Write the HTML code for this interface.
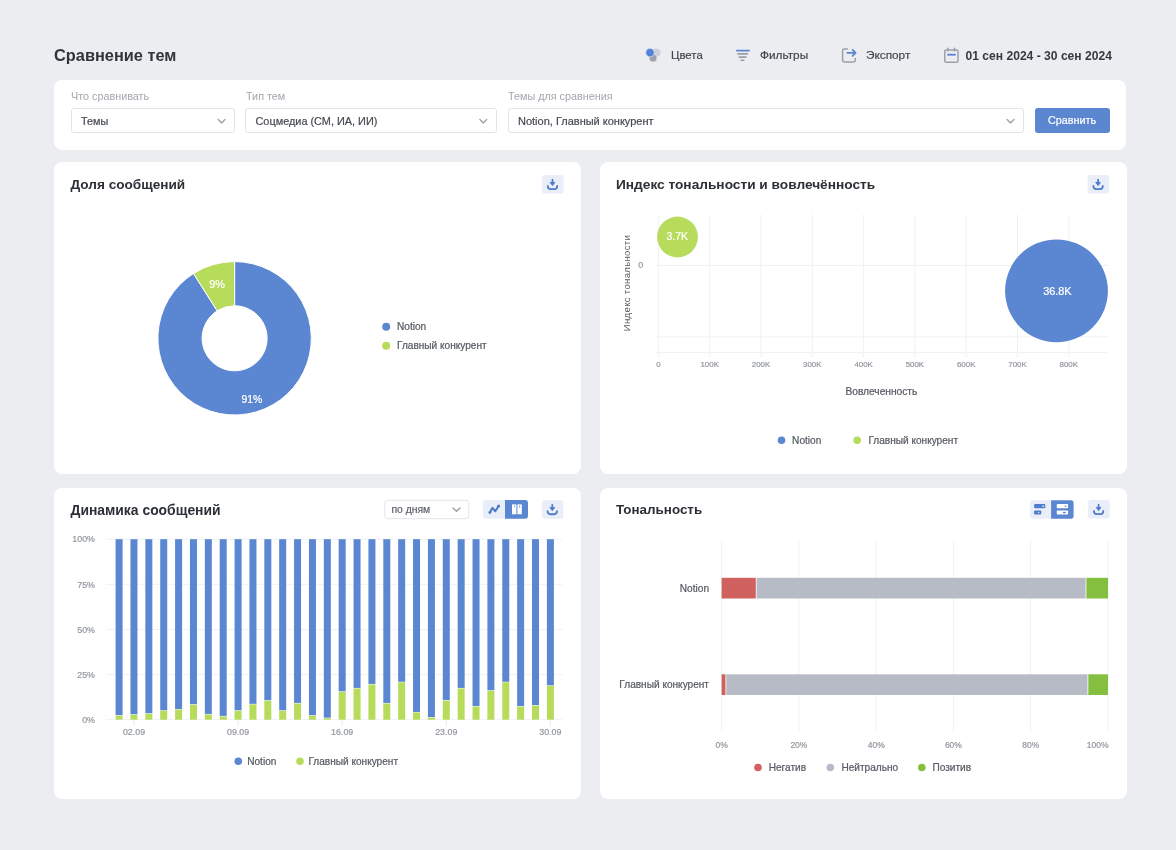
<!DOCTYPE html>
<html><head><meta charset="utf-8">
<style>
*{margin:0;padding:0;box-sizing:border-box}
html,body{width:1176px;height:850px;overflow:hidden;background:#ECEDF0;font-family:"Liberation Sans",sans-serif}
.a{position:absolute}
.card{position:absolute;background:#fff;border-radius:8px}
.t{position:absolute;white-space:nowrap;line-height:1}
.m{-webkit-text-stroke:0.2px currentColor}
svg{position:absolute;left:0;top:0;overflow:visible}
body>*{filter:blur(0.4px)}
</style></head><body>

<!-- header -->
<div class="t" style="left:54px;top:47.4px;font-size:16.35px;font-weight:bold;color:#30343B">Сравнение тем</div>

<div class="t m" style="left:671px;top:49.9px;font-size:11.4px;color:#41464E">Цвета</div>
<div class="t m" style="left:760px;top:49.9px;font-size:11.8px;color:#41464E">Фильтры</div>
<div class="t m" style="left:866px;top:49.9px;font-size:11.8px;color:#41464E">Экспорт</div>
<div class="t" style="left:965.5px;top:49.5px;font-size:12.1px;font-weight:bold;color:#363A41">01 сен 2024 - 30 сен 2024</div>

<!-- filter card -->
<div class="card" style="left:54px;top:80px;width:1072px;height:69.5px"></div>
<div class="t" style="left:71px;top:91.4px;font-size:10.8px;color:#A2A6AE">Что сравнивать</div>
<div class="t" style="left:246px;top:91.4px;font-size:10.8px;color:#A2A6AE">Тип тем</div>
<div class="t" style="left:508px;top:91.4px;font-size:10.8px;color:#A2A6AE">Темы для сравнения</div>

<div class="a" style="left:70.5px;top:107.5px;width:164.5px;height:25.5px;border:1px solid #E1E4EA;border-radius:3px"></div>
<div class="a" style="left:245px;top:107.5px;width:252px;height:25.5px;border:1px solid #E1E4EA;border-radius:3px"></div>
<div class="a" style="left:508px;top:107.5px;width:515.5px;height:25.5px;border:1px solid #E1E4EA;border-radius:3px"></div>
<div class="t m" style="left:81px;top:115.5px;font-size:10.8px;color:#454A52">Темы</div>
<div class="t m" style="left:255.5px;top:115.5px;font-size:10.9px;color:#454A52">Соцмедиа (СМ, ИА, ИИ)</div>
<div class="t m" style="left:518px;top:115.5px;font-size:11px;color:#454A52">Notion, Главный конкурент</div>
<div class="a" style="left:1034.5px;top:107.5px;width:75px;height:25.5px;background:#5B87D0;border-radius:3px"></div>
<div class="t m" style="left:1048px;top:115.4px;font-size:10.8px;color:#fff;-webkit-text-stroke:0.2px #fff">Сравнить</div>

<!-- chart cards -->
<div class="card" style="left:54px;top:161.5px;width:526.5px;height:312.3px"></div>
<div class="card" style="left:600px;top:161.5px;width:526.5px;height:312.3px"></div>
<div class="card" style="left:54px;top:488px;width:526.5px;height:311.2px"></div>
<div class="card" style="left:600px;top:488px;width:526.5px;height:311.2px"></div>

<div class="t" style="left:70.5px;top:177.9px;font-size:13.6px;font-weight:bold;color:#2B2F36">Доля сообщений</div>
<div class="t" style="left:616px;top:177.9px;font-size:13.7px;font-weight:bold;color:#2B2F36">Индекс тональности и вовлечённость</div>
<div class="t" style="left:70.5px;top:503.5px;font-size:13.9px;font-weight:bold;color:#2B2F36">Динамика сообщений</div>
<div class="t" style="left:616px;top:502.8px;font-size:13.4px;font-weight:bold;color:#2B2F36">Тональность</div>

<svg width="1176" height="850" viewBox="0 0 1176 850" font-family="Liberation Sans, sans-serif">
<circle cx="656.4" cy="52.6" r="4.2" fill="#CDD0D8"/>
<circle cx="653" cy="58" r="4" fill="#9EA2AC" stroke="#ECEDF0" stroke-width="0.6"/>
<circle cx="650" cy="52.6" r="4.3" fill="#5383D8" stroke="#ECEDF0" stroke-width="0.7"/>
<path d="M736.9 50.6 H749" stroke="#5B86D1" stroke-width="1.9" stroke-linecap="round"/>
<path d="M737.9 53.9 H747.4 M739.3 57.1 H746 M741.1 60.3 H743.8" stroke="#9A9FA9" stroke-width="1.6" stroke-linecap="round"/>
<path d="M847.4 48.9 H844.2 Q842.6 48.9 842.6 50.5 V60.3 Q842.6 61.9 844.2 61.9 H853.7 Q855.3 61.9 855.3 60.3 V58.4" fill="none" stroke="#9A9FA8" stroke-width="1.5" stroke-linecap="round"/>
<path d="M847.3 52.9 H855 M852.6 49.9 L855.6 52.9 L852.6 55.9" fill="none" stroke="#5B86D1" stroke-width="1.8" stroke-linecap="round" stroke-linejoin="round"/>
<rect x="944.8" y="50.1" width="13.2" height="12.2" rx="1.3" fill="none" stroke="#9C9FAB" stroke-width="1.5"/>
<path d="M948 48.2 V51 M954.4 48.2 V51" stroke="#9C9FAB" stroke-width="1.5" stroke-linecap="round"/>
<path d="M947.3 54.7 H955.7" stroke="#5B86D1" stroke-width="1.9"/>
<path d="M218.2 119.5 L221.6 122.9 L225.0 119.5" fill="none" stroke="#9A9FA8" stroke-width="1.35" stroke-linecap="round" stroke-linejoin="round"/>
<path d="M479.90000000000003 119.5 L483.3 122.9 L486.7 119.5" fill="none" stroke="#9A9FA8" stroke-width="1.35" stroke-linecap="round" stroke-linejoin="round"/>
<path d="M1007.1 119.5 L1010.5 122.9 L1013.9 119.5" fill="none" stroke="#9A9FA8" stroke-width="1.35" stroke-linecap="round" stroke-linejoin="round"/>
<path d="M234.60 261.60 A76.7 76.7 0 1 1 193.50 273.54 L217.19 310.86 A32.5 32.5 0 1 0 234.60 305.80 Z" fill="#5B86D1" stroke="#fff" stroke-width="1"/>
<path d="M193.50 273.54 A76.7 76.7 0 0 1 234.60 261.60 L234.60 305.80 A32.5 32.5 0 0 0 217.19 310.86 Z" fill="#B7DB5A" stroke="#fff" stroke-width="1"/>
<text x="217" y="287.6" font-size="10.9" fill="#fff" font-weight="normal" text-anchor="middle" stroke="#fff" stroke-width="0.22" >9%</text>
<text x="251.8" y="403.1" font-size="10.4" fill="#fff" font-weight="normal" text-anchor="middle" stroke="#fff" stroke-width="0.22" >91%</text>
<circle cx="386.2" cy="326.8" r="4" fill="#5B86D1"/>
<circle cx="386.2" cy="345.7" r="4" fill="#B7DB5A"/>
<text x="397" y="329.9" font-size="10.1" fill="#565B63" font-weight="normal" text-anchor="start" stroke="#565B63" stroke-width="0.22" >Notion</text>
<text x="397" y="348.9" font-size="10.1" fill="#565B63" font-weight="normal" text-anchor="start" stroke="#565B63" stroke-width="0.22" >Главный конкурент</text>
<rect x="542" y="175.1" width="21.6" height="18.5" rx="2.6" fill="#EAEEF8"/><path d="M552.50 179.75 V183.15" stroke="#4F7CCB" stroke-width="1.8" stroke-linecap="round"/><path d="M550.10 182.45 L554.90 182.45 L552.50 185.55 Z" fill="#4F7CCB" stroke="#4F7CCB" stroke-width="0.9" stroke-linejoin="round"/><path d="M547.80 185.95 Q547.80 189.15 550.70 189.15 H554.30 Q557.20 189.15 557.20 185.95" fill="none" stroke="#4F7CCB" stroke-width="1.8" stroke-linecap="round"/>
<line x1="658.4" y1="214.5" x2="658.4" y2="357.2" stroke="#F0F1F4" stroke-width="1"/>
<line x1="709.7" y1="214.5" x2="709.7" y2="357.2" stroke="#F0F1F4" stroke-width="1"/>
<line x1="761.0" y1="214.5" x2="761.0" y2="357.2" stroke="#F0F1F4" stroke-width="1"/>
<line x1="812.3" y1="214.5" x2="812.3" y2="357.2" stroke="#F0F1F4" stroke-width="1"/>
<line x1="863.6" y1="214.5" x2="863.6" y2="357.2" stroke="#F0F1F4" stroke-width="1"/>
<line x1="914.9" y1="214.5" x2="914.9" y2="357.2" stroke="#F0F1F4" stroke-width="1"/>
<line x1="966.2" y1="214.5" x2="966.2" y2="357.2" stroke="#F0F1F4" stroke-width="1"/>
<line x1="1017.5" y1="214.5" x2="1017.5" y2="357.2" stroke="#F0F1F4" stroke-width="1"/>
<line x1="1068.8" y1="214.5" x2="1068.8" y2="357.2" stroke="#F0F1F4" stroke-width="1"/>
<line x1="656" y1="265.5" x2="1108" y2="265.5" stroke="#F0F1F4" stroke-width="1"/>
<line x1="656" y1="336.8" x2="1108" y2="336.8" stroke="#F0F1F4" stroke-width="1"/>
<line x1="656" y1="352.6" x2="1108" y2="352.6" stroke="#F0F1F4" stroke-width="1"/>
<text x="658.4" y="367.3" font-size="7.9" fill="#9498A0" font-weight="normal" text-anchor="middle" stroke="#9498A0" stroke-width="0.22" >0</text>
<text x="709.7" y="367.3" font-size="7.9" fill="#9498A0" font-weight="normal" text-anchor="middle" stroke="#9498A0" stroke-width="0.22" >100K</text>
<text x="761.0" y="367.3" font-size="7.9" fill="#9498A0" font-weight="normal" text-anchor="middle" stroke="#9498A0" stroke-width="0.22" >200K</text>
<text x="812.3" y="367.3" font-size="7.9" fill="#9498A0" font-weight="normal" text-anchor="middle" stroke="#9498A0" stroke-width="0.22" >300K</text>
<text x="863.6" y="367.3" font-size="7.9" fill="#9498A0" font-weight="normal" text-anchor="middle" stroke="#9498A0" stroke-width="0.22" >400K</text>
<text x="914.9" y="367.3" font-size="7.9" fill="#9498A0" font-weight="normal" text-anchor="middle" stroke="#9498A0" stroke-width="0.22" >500K</text>
<text x="966.2" y="367.3" font-size="7.9" fill="#9498A0" font-weight="normal" text-anchor="middle" stroke="#9498A0" stroke-width="0.22" >600K</text>
<text x="1017.5" y="367.3" font-size="7.9" fill="#9498A0" font-weight="normal" text-anchor="middle" stroke="#9498A0" stroke-width="0.22" >700K</text>
<text x="1068.8" y="367.3" font-size="7.9" fill="#9498A0" font-weight="normal" text-anchor="middle" stroke="#9498A0" stroke-width="0.22" >800K</text>
<text x="640.7" y="268.2" font-size="8.8" fill="#9498A0" font-weight="normal" text-anchor="middle" stroke="#9498A0" stroke-width="0.22" >0</text>
<text x="0" y="0" font-size="9.6" fill="#565B63" font-weight="normal" text-anchor="middle" letter-spacing="0.3" transform="translate(630.3 283) rotate(-90)">Индекс тональности</text>
<text x="881.4" y="394.6" font-size="10.2" fill="#565B63" font-weight="normal" text-anchor="middle" stroke="#565B63" stroke-width="0.22" >Вовлеченность</text>
<circle cx="677.5" cy="237" r="20.4" fill="#B7DB5A"/>
<text x="677.3" y="240.4" font-size="10.45" fill="#fff" font-weight="normal" text-anchor="middle" stroke="#fff" stroke-width="0.22" >3.7K</text>
<circle cx="1056.5" cy="290.8" r="51.4" fill="#5B86D1"/>
<text x="1057.4" y="295.4" font-size="10.9" fill="#fff" font-weight="normal" text-anchor="middle" stroke="#fff" stroke-width="0.22" >36.8K</text>
<circle cx="781.5" cy="440.3" r="3.8" fill="#5B86D1"/>
<circle cx="857.2" cy="440.3" r="3.8" fill="#B7DB5A"/>
<text x="792.1" y="443.5" font-size="10.1" fill="#565B63" font-weight="normal" text-anchor="start" stroke="#565B63" stroke-width="0.22" >Notion</text>
<text x="868.4" y="443.5" font-size="10.1" fill="#565B63" font-weight="normal" text-anchor="start" stroke="#565B63" stroke-width="0.22" >Главный конкурент</text>
<rect x="1087.6" y="175.1" width="21.6" height="18.5" rx="2.6" fill="#EAEEF8"/><path d="M1098.10 179.75 V183.15" stroke="#4F7CCB" stroke-width="1.8" stroke-linecap="round"/><path d="M1095.70 182.45 L1100.50 182.45 L1098.10 185.55 Z" fill="#4F7CCB" stroke="#4F7CCB" stroke-width="0.9" stroke-linejoin="round"/><path d="M1093.40 185.95 Q1093.40 189.15 1096.30 189.15 H1099.90 Q1102.80 189.15 1102.80 185.95" fill="none" stroke="#4F7CCB" stroke-width="1.8" stroke-linecap="round"/>
<line x1="106" y1="539.2" x2="562.5" y2="539.2" stroke="#F0F1F4" stroke-width="1"/>
<text x="95" y="542.4" font-size="8.9" fill="#9498A0" font-weight="normal" text-anchor="end" stroke="#9498A0" stroke-width="0.22" >100%</text>
<line x1="106" y1="584.3" x2="562.5" y2="584.3" stroke="#F0F1F4" stroke-width="1"/>
<text x="95" y="587.5" font-size="8.9" fill="#9498A0" font-weight="normal" text-anchor="end" stroke="#9498A0" stroke-width="0.22" >75%</text>
<line x1="106" y1="629.5" x2="562.5" y2="629.5" stroke="#F0F1F4" stroke-width="1"/>
<text x="95" y="632.7" font-size="8.9" fill="#9498A0" font-weight="normal" text-anchor="end" stroke="#9498A0" stroke-width="0.22" >50%</text>
<line x1="106" y1="674.6" x2="562.5" y2="674.6" stroke="#F0F1F4" stroke-width="1"/>
<text x="95" y="677.8" font-size="8.9" fill="#9498A0" font-weight="normal" text-anchor="end" stroke="#9498A0" stroke-width="0.22" >25%</text>
<line x1="106" y1="719.7" x2="562.5" y2="719.7" stroke="#F0F1F4" stroke-width="1"/>
<text x="95" y="722.9" font-size="8.9" fill="#9498A0" font-weight="normal" text-anchor="end" stroke="#9498A0" stroke-width="0.22" >0%</text>
<rect x="115.60" y="539.20" width="7" height="175.99" fill="#5B86D1"/>
<rect x="115.60" y="715.69" width="7" height="4.01" fill="#B7DB5A"/>
<rect x="130.47" y="539.20" width="7" height="175.09" fill="#5B86D1"/>
<rect x="130.47" y="714.79" width="7" height="4.92" fill="#B7DB5A"/>
<rect x="145.34" y="539.20" width="7" height="174.00" fill="#5B86D1"/>
<rect x="145.34" y="713.70" width="7" height="6.00" fill="#B7DB5A"/>
<rect x="160.22" y="539.20" width="7" height="171.11" fill="#5B86D1"/>
<rect x="160.22" y="710.81" width="7" height="8.89" fill="#B7DB5A"/>
<rect x="175.09" y="539.20" width="7" height="169.85" fill="#5B86D1"/>
<rect x="175.09" y="709.55" width="7" height="10.15" fill="#B7DB5A"/>
<rect x="189.96" y="539.20" width="7" height="164.98" fill="#5B86D1"/>
<rect x="189.96" y="704.68" width="7" height="15.02" fill="#B7DB5A"/>
<rect x="204.83" y="539.20" width="7" height="174.72" fill="#5B86D1"/>
<rect x="204.83" y="714.42" width="7" height="5.28" fill="#B7DB5A"/>
<rect x="219.70" y="539.20" width="7" height="176.71" fill="#5B86D1"/>
<rect x="219.70" y="716.41" width="7" height="3.29" fill="#B7DB5A"/>
<rect x="234.58" y="539.20" width="7" height="171.11" fill="#5B86D1"/>
<rect x="234.58" y="710.81" width="7" height="8.89" fill="#B7DB5A"/>
<rect x="249.45" y="539.20" width="7" height="164.62" fill="#5B86D1"/>
<rect x="249.45" y="704.32" width="7" height="15.38" fill="#B7DB5A"/>
<rect x="264.32" y="539.20" width="7" height="161.01" fill="#5B86D1"/>
<rect x="264.32" y="700.71" width="7" height="18.99" fill="#B7DB5A"/>
<rect x="279.19" y="539.20" width="7" height="171.11" fill="#5B86D1"/>
<rect x="279.19" y="710.81" width="7" height="8.89" fill="#B7DB5A"/>
<rect x="294.06" y="539.20" width="7" height="163.71" fill="#5B86D1"/>
<rect x="294.06" y="703.41" width="7" height="16.29" fill="#B7DB5A"/>
<rect x="308.94" y="539.20" width="7" height="175.99" fill="#5B86D1"/>
<rect x="308.94" y="715.69" width="7" height="4.01" fill="#B7DB5A"/>
<rect x="323.81" y="539.20" width="7" height="178.51" fill="#5B86D1"/>
<rect x="323.81" y="718.21" width="7" height="1.49" fill="#B7DB5A"/>
<rect x="338.68" y="539.20" width="7" height="152.16" fill="#5B86D1"/>
<rect x="338.68" y="691.86" width="7" height="27.84" fill="#B7DB5A"/>
<rect x="353.55" y="539.20" width="7" height="148.73" fill="#5B86D1"/>
<rect x="353.55" y="688.43" width="7" height="31.27" fill="#B7DB5A"/>
<rect x="368.42" y="539.20" width="7" height="144.76" fill="#5B86D1"/>
<rect x="368.42" y="684.46" width="7" height="35.24" fill="#B7DB5A"/>
<rect x="383.30" y="539.20" width="7" height="163.71" fill="#5B86D1"/>
<rect x="383.30" y="703.41" width="7" height="16.29" fill="#B7DB5A"/>
<rect x="398.17" y="539.20" width="7" height="142.59" fill="#5B86D1"/>
<rect x="398.17" y="682.30" width="7" height="37.41" fill="#B7DB5A"/>
<rect x="413.04" y="539.20" width="7" height="172.74" fill="#5B86D1"/>
<rect x="413.04" y="712.44" width="7" height="7.26" fill="#B7DB5A"/>
<rect x="427.91" y="539.20" width="7" height="177.79" fill="#5B86D1"/>
<rect x="427.91" y="717.49" width="7" height="2.21" fill="#B7DB5A"/>
<rect x="442.78" y="539.20" width="7" height="160.83" fill="#5B86D1"/>
<rect x="442.78" y="700.53" width="7" height="19.17" fill="#B7DB5A"/>
<rect x="457.66" y="539.20" width="7" height="148.73" fill="#5B86D1"/>
<rect x="457.66" y="688.43" width="7" height="31.27" fill="#B7DB5A"/>
<rect x="472.53" y="539.20" width="7" height="166.78" fill="#5B86D1"/>
<rect x="472.53" y="706.48" width="7" height="13.22" fill="#B7DB5A"/>
<rect x="487.40" y="539.20" width="7" height="151.08" fill="#5B86D1"/>
<rect x="487.40" y="690.78" width="7" height="28.92" fill="#B7DB5A"/>
<rect x="502.27" y="539.20" width="7" height="142.59" fill="#5B86D1"/>
<rect x="502.27" y="682.30" width="7" height="37.41" fill="#B7DB5A"/>
<rect x="517.14" y="539.20" width="7" height="166.78" fill="#5B86D1"/>
<rect x="517.14" y="706.48" width="7" height="13.22" fill="#B7DB5A"/>
<rect x="532.02" y="539.20" width="7" height="165.88" fill="#5B86D1"/>
<rect x="532.02" y="705.58" width="7" height="14.12" fill="#B7DB5A"/>
<rect x="546.89" y="539.20" width="7" height="146.20" fill="#5B86D1"/>
<rect x="546.89" y="685.91" width="7" height="33.80" fill="#B7DB5A"/>
<line x1="134.0" y1="720" x2="134.0" y2="725.5" stroke="#E6E8EC" stroke-width="1"/>
<text x="134.0" y="735.2" font-size="8.9" fill="#9498A0" font-weight="normal" text-anchor="middle" stroke="#9498A0" stroke-width="0.22" >02.09</text>
<line x1="238.1" y1="720" x2="238.1" y2="725.5" stroke="#E6E8EC" stroke-width="1"/>
<text x="238.1" y="735.2" font-size="8.9" fill="#9498A0" font-weight="normal" text-anchor="middle" stroke="#9498A0" stroke-width="0.22" >09.09</text>
<line x1="342.2" y1="720" x2="342.2" y2="725.5" stroke="#E6E8EC" stroke-width="1"/>
<text x="342.2" y="735.2" font-size="8.9" fill="#9498A0" font-weight="normal" text-anchor="middle" stroke="#9498A0" stroke-width="0.22" >16.09</text>
<line x1="446.3" y1="720" x2="446.3" y2="725.5" stroke="#E6E8EC" stroke-width="1"/>
<text x="446.3" y="735.2" font-size="8.9" fill="#9498A0" font-weight="normal" text-anchor="middle" stroke="#9498A0" stroke-width="0.22" >23.09</text>
<line x1="550.4" y1="720" x2="550.4" y2="725.5" stroke="#E6E8EC" stroke-width="1"/>
<text x="550.4" y="735.2" font-size="8.9" fill="#9498A0" font-weight="normal" text-anchor="middle" stroke="#9498A0" stroke-width="0.22" >30.09</text>
<circle cx="238.3" cy="761.2" r="3.8" fill="#5B86D1"/>
<circle cx="300" cy="761.2" r="3.8" fill="#B7DB5A"/>
<text x="247.2" y="764.5" font-size="10.1" fill="#565B63" font-weight="normal" text-anchor="start" stroke="#565B63" stroke-width="0.22" >Notion</text>
<text x="308.4" y="764.5" font-size="10.1" fill="#565B63" font-weight="normal" text-anchor="start" stroke="#565B63" stroke-width="0.22" >Главный конкурент</text>
<rect x="384.8" y="500.3" width="84" height="18.4" rx="3" fill="#fff" stroke="#E1E4EA" stroke-width="1"/>
<text x="391.4" y="512.6" font-size="10.4" fill="#565B63" font-weight="normal" text-anchor="start" stroke="#565B63" stroke-width="0.15" >по дням</text>
<path d="M453 507.9 L456.5 511.3 L460 507.9" fill="none" stroke="#9A9FA8" stroke-width="1.4" stroke-linecap="round" stroke-linejoin="round"/>
<path d="M485.5 500.1 H505 V518.8 H485.5 Q482.8 518.8 482.8 516.1 V502.8 Q482.8 500.1 485.5 500.1 Z" fill="#EAEEF8"/>
<path d="M505 500 H525 Q528 500 528 503 V515.8 Q528 518.8 525 518.8 H505 Z" fill="#5B86D1"/>
<path d="M489.9 512.5 L492.5 507.8 L495.3 511.3 L498.6 506" fill="none" stroke="#4F7CCB" stroke-width="2.1" stroke-linecap="round" stroke-linejoin="round"/>
<circle cx="489.9" cy="512.5" r="1.4" fill="#4F7CCB"/><circle cx="498.6" cy="506" r="1.5" fill="#4F7CCB"/>
<rect x="512" y="504.4" width="4.4" height="9.9" fill="#fff"/><rect x="517.4" y="504.4" width="4.4" height="9.9" fill="#fff"/>
<rect x="513.8" y="505.6" width="1.2" height="1.6" fill="#5B86D1" opacity="0.7"/><rect x="519" y="505.6" width="1.2" height="2.2" fill="#5B86D1" opacity="0.7"/>
<rect x="541.8" y="500.2" width="21.6" height="18.5" rx="2.6" fill="#EAEEF8"/><path d="M552.30 504.85 V508.25" stroke="#4F7CCB" stroke-width="1.8" stroke-linecap="round"/><path d="M549.90 507.55 L554.70 507.55 L552.30 510.65 Z" fill="#4F7CCB" stroke="#4F7CCB" stroke-width="0.9" stroke-linejoin="round"/><path d="M547.60 511.05 Q547.60 514.25 550.50 514.25 H554.10 Q557.00 514.25 557.00 511.05" fill="none" stroke="#4F7CCB" stroke-width="1.8" stroke-linecap="round"/>
<line x1="721.6" y1="540.8" x2="721.6" y2="731.6" stroke="#F0F1F4" stroke-width="1"/>
<text x="721.6" y="747.6" font-size="8.5" fill="#9498A0" font-weight="normal" text-anchor="middle" stroke="#9498A0" stroke-width="0.22" >0%</text>
<line x1="798.9" y1="540.8" x2="798.9" y2="731.6" stroke="#F0F1F4" stroke-width="1"/>
<text x="798.9" y="747.6" font-size="8.5" fill="#9498A0" font-weight="normal" text-anchor="middle" stroke="#9498A0" stroke-width="0.22" >20%</text>
<line x1="876.2" y1="540.8" x2="876.2" y2="731.6" stroke="#F0F1F4" stroke-width="1"/>
<text x="876.2" y="747.6" font-size="8.5" fill="#9498A0" font-weight="normal" text-anchor="middle" stroke="#9498A0" stroke-width="0.22" >40%</text>
<line x1="953.4" y1="540.8" x2="953.4" y2="731.6" stroke="#F0F1F4" stroke-width="1"/>
<text x="953.4" y="747.6" font-size="8.5" fill="#9498A0" font-weight="normal" text-anchor="middle" stroke="#9498A0" stroke-width="0.22" >60%</text>
<line x1="1030.7" y1="540.8" x2="1030.7" y2="731.6" stroke="#F0F1F4" stroke-width="1"/>
<text x="1030.7" y="747.6" font-size="8.5" fill="#9498A0" font-weight="normal" text-anchor="middle" stroke="#9498A0" stroke-width="0.22" >80%</text>
<line x1="1108.0" y1="540.8" x2="1108.0" y2="731.6" stroke="#F0F1F4" stroke-width="1"/>
<text x="1108.5" y="747.6" font-size="8.5" fill="#9498A0" font-weight="normal" text-anchor="end" stroke="#9498A0" stroke-width="0.22" >100%</text>
<rect x="721.6" y="577.8" width="34.20" height="20.7" fill="#CF625E"/><rect x="756.60" y="577.8" width="328.97" height="20.7" fill="#B7BBC5"/><rect x="1086.36" y="577.8" width="21.64" height="20.7" fill="#85BF3F"/>
<rect x="721.6" y="674.3" width="3.86" height="20.7" fill="#CF625E"/><rect x="726.26" y="674.3" width="361.23" height="20.7" fill="#B7BBC5"/><rect x="1088.29" y="674.3" width="19.71" height="20.7" fill="#85BF3F"/>
<text x="709" y="591.6" font-size="10.1" fill="#565B63" font-weight="normal" text-anchor="end" stroke="#565B63" stroke-width="0.22" >Notion</text>
<text x="709" y="688.2" font-size="10.1" fill="#565B63" font-weight="normal" text-anchor="end" stroke="#565B63" stroke-width="0.22" >Главный конкурент</text>
<circle cx="758" cy="767.5" r="3.8" fill="#CF625E"/>
<circle cx="830.3" cy="767.5" r="3.8" fill="#B7BBC5"/>
<circle cx="921.8" cy="767.5" r="3.8" fill="#85BF3F"/>
<text x="768.7" y="771" font-size="10.1" fill="#565B63" font-weight="normal" text-anchor="start" stroke="#565B63" stroke-width="0.22" >Негатив</text>
<text x="841.4" y="771" font-size="10.1" fill="#565B63" font-weight="normal" text-anchor="start" stroke="#565B63" stroke-width="0.22" >Нейтрально</text>
<text x="932.4" y="771" font-size="10.1" fill="#565B63" font-weight="normal" text-anchor="start" stroke="#565B63" stroke-width="0.22" >Позитив</text>
<path d="M1032.8 500.2 H1051.1 V518.7 H1032.8 Q1030.2 518.7 1030.2 516.1 V502.8 Q1030.2 500.2 1032.8 500.2 Z" fill="#EAEEF8"/>
<path d="M1051.1 500.2 H1070.8 Q1073.6 500.2 1073.6 503 V515.9 Q1073.6 518.7 1070.8 518.7 H1051.1 Z" fill="#5B86D1"/>
<rect x="1034.1" y="504" width="11.2" height="4.3" rx="1" fill="#4F7CCB"/><rect x="1034.1" y="510.4" width="7.2" height="4.2" rx="1" fill="#4F7CCB"/>
<circle cx="1043.1" cy="506.15" r="0.9" fill="#fff" opacity="0.8"/><path d="M1037.6 512.1 H1039.6 L1038.6 513.4 Z" fill="#fff" opacity="0.85"/>
<rect x="1056.8" y="504" width="11.3" height="4.3" rx="0.8" fill="#fff"/><rect x="1056.8" y="510.4" width="11.3" height="4.2" rx="0.8" fill="#fff"/>
<circle cx="1065.5" cy="506.15" r="0.9" fill="#5B86D1" opacity="0.8"/><ellipse cx="1064.3" cy="512.6" rx="1.6" ry="0.8" fill="#5B86D1"/>
<rect x="1088.1" y="500.1" width="21.6" height="18.5" rx="2.6" fill="#EAEEF8"/><path d="M1098.60 504.75 V508.15" stroke="#4F7CCB" stroke-width="1.8" stroke-linecap="round"/><path d="M1096.20 507.45 L1101.00 507.45 L1098.60 510.55 Z" fill="#4F7CCB" stroke="#4F7CCB" stroke-width="0.9" stroke-linejoin="round"/><path d="M1093.90 510.95 Q1093.90 514.15 1096.80 514.15 H1100.40 Q1103.30 514.15 1103.30 510.95" fill="none" stroke="#4F7CCB" stroke-width="1.8" stroke-linecap="round"/>
</svg>
</body></html>
